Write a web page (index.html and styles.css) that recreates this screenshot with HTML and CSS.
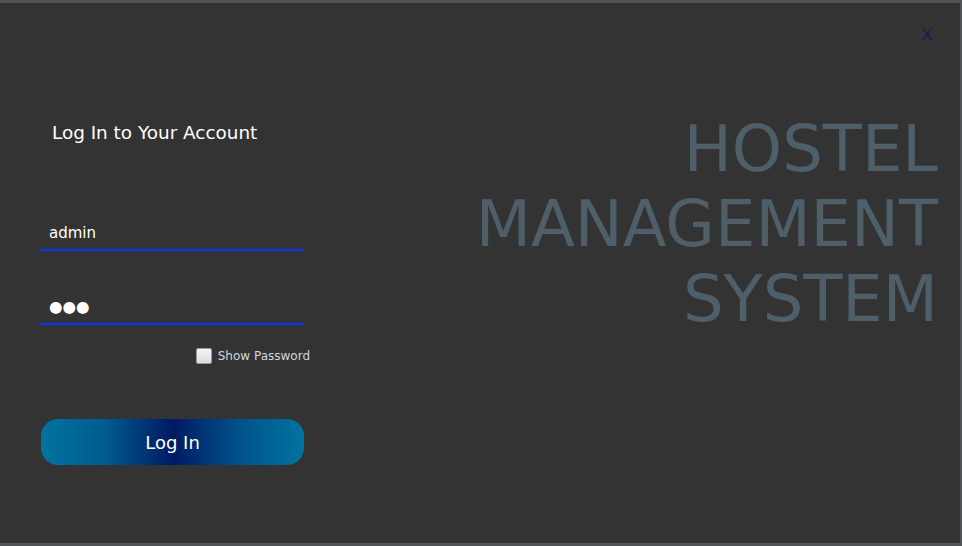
FILE: index.html
```html
<!DOCTYPE html>
<html>
<head>
<meta charset="utf-8">
<link rel="stylesheet" href="styles.css">
</head>
<body>
<div class="frame">
  <div class="left">
    <div class="title">Log In to Your Account</div>
    <div class="field user">admin</div>
    <div class="field pass">●●●</div>
    <div class="show-row">
      <span class="checkbox"></span>
      <span class="show-label">Show Password</span>
    </div>
    <button class="login">Log In</button>
  </div>
  <div class="right">
    <div class="brand">HOSTEL<br>MANAGEMENT<br>SYSTEM</div>
  </div>
  <div class="close">X</div>
</div>
</body>
</html>
```

FILE: styles.css
```css
html, body {
  margin: 0;
  padding: 0;
  background: #333333;
}
.frame {
  position: relative;
  box-sizing: border-box;
  width: 962px;
  height: 546px;
  background: #333333;
  border-top: 3px solid #4f5557;
  border-right: 2px solid #4f5557;
  border-bottom: 3px solid #4f5557;
  display: flex;
  font-family: "DejaVu Sans", sans-serif;
}
.left {
  width: 420px;
  padding: 119px 0 0 40px;
  box-sizing: border-box;
  display: flex;
  flex-direction: column;
  align-items: flex-start;
}
.title {
  color: #ffffff;
  font-size: 18.4px;
  line-height: 22px;
  margin-left: 12px;
}
.field {
  box-sizing: content-box;
  width: 255px;
  height: 20px;
  line-height: 20px;
  padding: 0 0 6px 9px;
  border-bottom: 2px solid #0733ff;
  color: #ffffff;
  font-size: 15px;
}
.user {
  margin-top: 79px;
}
.pass {
  margin-top: 46px;
  font-size: 15.5px;
}
.show-row {
  margin-top: 23px;
  width: 270px;
  display: flex;
  justify-content: flex-end;
  align-items: center;
  gap: 5px;
}
.checkbox {
  box-sizing: border-box;
  width: 16px;
  height: 16px;
  border: 1px solid #9a9a9a;
  border-radius: 2px;
  background: linear-gradient(#f4f4f4, #dcdcdc);
  margin-right: 1px;
}
.show-label {
  color: #d2d8de;
  font-size: 12px;
}
.login {
  margin-top: 55px;
  margin-left: 1px;
  width: 263px;
  height: 46px;
  border: none;
  border-radius: 17px;
  background: linear-gradient(90deg, #0074a0 0%, #005a8e 25%, #001a62 50%, #00528a 75%, #0074a0 100%);
  color: #ffffff;
  font-family: "DejaVu Sans", sans-serif;
  font-size: 18px;
  padding: 0;
}
.right {
  flex: 1;
  display: flex;
  justify-content: flex-end;
  padding: 109px 22px 0 0;
}
.brand {
  text-align: right;
  color: #4e5f6a;
  font-size: 64px;
  line-height: 75px;
}
.close {
  position: absolute;
  top: 20px;
  right: 27px;
  color: #1c1c52;
  font-size: 18px;
  line-height: 24px;
}
```
